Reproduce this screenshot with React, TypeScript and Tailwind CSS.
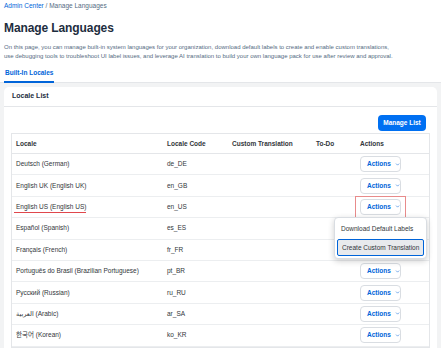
import { ChevronDown } from "lucide-react";

const locales = [
  { name: "Deutsch (German)", code: "de_DE" },
  { name: "English UK (English UK)", code: "en_GB" },
  { name: "English US (English US)", code: "en_US", marked: true },
  { name: "Español (Spanish)", code: "es_ES", covered: true },
  { name: "Français (French)", code: "fr_FR", covered: true },
  { name: "Português do Brasil (Brazilian Portuguese)", code: "pt_BR" },
  { name: "Русский (Russian)", code: "ru_RU" },
  { name: "العربية (Arabic)", code: "ar_SA" },
  { name: "한국어 (Korean)", code: "ko_KR" },
];

const cols = "grid grid-cols-[151px_65px_84px_44px_1fr]";

function ActionsButton() {
  return (
    <button className="flex items-center gap-[4px] h-[16px] w-[41px] pl-[6px] border border-[#d9dde2] rounded-[4px] bg-white text-[#0064d9] text-[6.5px] font-bold">
      Actions <ChevronDown size={7} strokeWidth={2.5} />
    </button>
  );
}

export default function App() {
  return (
    <div className="w-[441px] h-[348px] overflow-hidden bg-[#f2f3f4] text-[#32363a]" style={{ fontFamily: '"Liberation Sans", "Noto Sans CJK KR", "DejaVu Sans", sans-serif' }}>
      <div className="bg-white px-[4px] border-b border-[#e4e6e9]">
        <div className="pt-[2px] text-[6.5px] leading-[8px]">
          <span className="text-[#0064d9]">Admin Center</span>
          <span className="text-[#556b82]"> / Manage Languages</span>
        </div>
        <h1 className="mt-[10px] text-[12px] leading-[16px] font-bold tracking-[-0.1px] text-[#1d2d3e]">Manage Languages</h1>
        <div className="mt-[7px] text-[6px] leading-[8.5px] text-[#556b82]">
          <div className="whitespace-nowrap">On this page, you can manage built-in system languages for your organization, download default labels to create and enable custom translations,</div>
          <div className="whitespace-nowrap">use debugging tools to troubleshoot UI label issues, and leverage AI translation to build your own language pack for use after review and approval.</div>
        </div>
        <div className="mt-[4px] flex">
          <div className="pt-[5px] pb-[4px] px-[1px] -mb-px border-b-2 border-[#0064d9] text-[6.5px] leading-[8px] font-bold text-[#0064d9]">Built-In Locales</div>
        </div>
      </div>

      <div className="px-[4px] pt-[4px]">
        <div className="bg-white rounded-t-[5px] h-[300px]">
          <div className="h-[20px] flex items-center px-[8px] border-b border-[#e4e6e9] text-[7px] font-bold text-[#1d2d3e]">Locale List</div>
          <div className="pl-[7px] pr-[7px]">
            <div className="flex justify-end pt-[8px] pb-[2px] pr-[4px]">
              <button className="h-[16px] w-[48px] rounded-[4px] bg-[#0070f2] text-white text-[6.5px] font-bold">Manage List</button>
            </div>
            <div className="relative border border-[#e4e6e9]">
              <div className={`${cols} h-[20px] items-center border-b border-[#e4e6e9] text-[6.5px] font-bold text-[#32363a]`}>
                <div className="pl-[4px]">Locale</div>
                <div className="pl-[4px]">Locale Code</div>
                <div className="pl-[4px]">Custom Translation</div>
                <div className="pl-[4px]">To-Do</div>
                <div className="pl-[4px]">Actions</div>
              </div>
              {locales.map((l) => (
                <div key={l.code} className={`${cols} h-[21.4px] items-center border-b border-[#eceef0] text-[6.5px]`}>
                  <div className="pl-[4px] whitespace-nowrap">
                    <span className="relative">
                      {l.name}
                      {l.marked && <span className="absolute left-[-2px] right-0 bottom-[-3px] h-px bg-[#e0474c]" />}
                    </span>
                  </div>
                  <div className="pl-[4px]">{l.code}</div>
                  <div />
                  <div />
                  <div className="pl-[4px]">{!l.covered && <ActionsButton />}</div>
                </div>
              ))}

              <div className="absolute left-[343px] top-[62px] w-[51px] h-[24px] border border-[#e88b8b]" />

              <div className="absolute left-[322px] top-[83px] w-[93px] bg-white rounded-[4px] border border-[#d9dde2] shadow-[0_2px_6px_rgba(0,0,0,0.2)] p-[2px] flex flex-col gap-[1px] text-[6.5px] text-[#32363a]">
                <div className="h-[18px] flex items-center pl-[4px]">Download Default Labels</div>
                <div className="h-[17px] flex items-center pl-[4px] bg-[#e8eaed] border border-[#0064d9] rounded-[2px]">Create Custom Translation</div>
              </div>
            </div>
          </div>
        </div>
      </div>
    </div>
  );
}
